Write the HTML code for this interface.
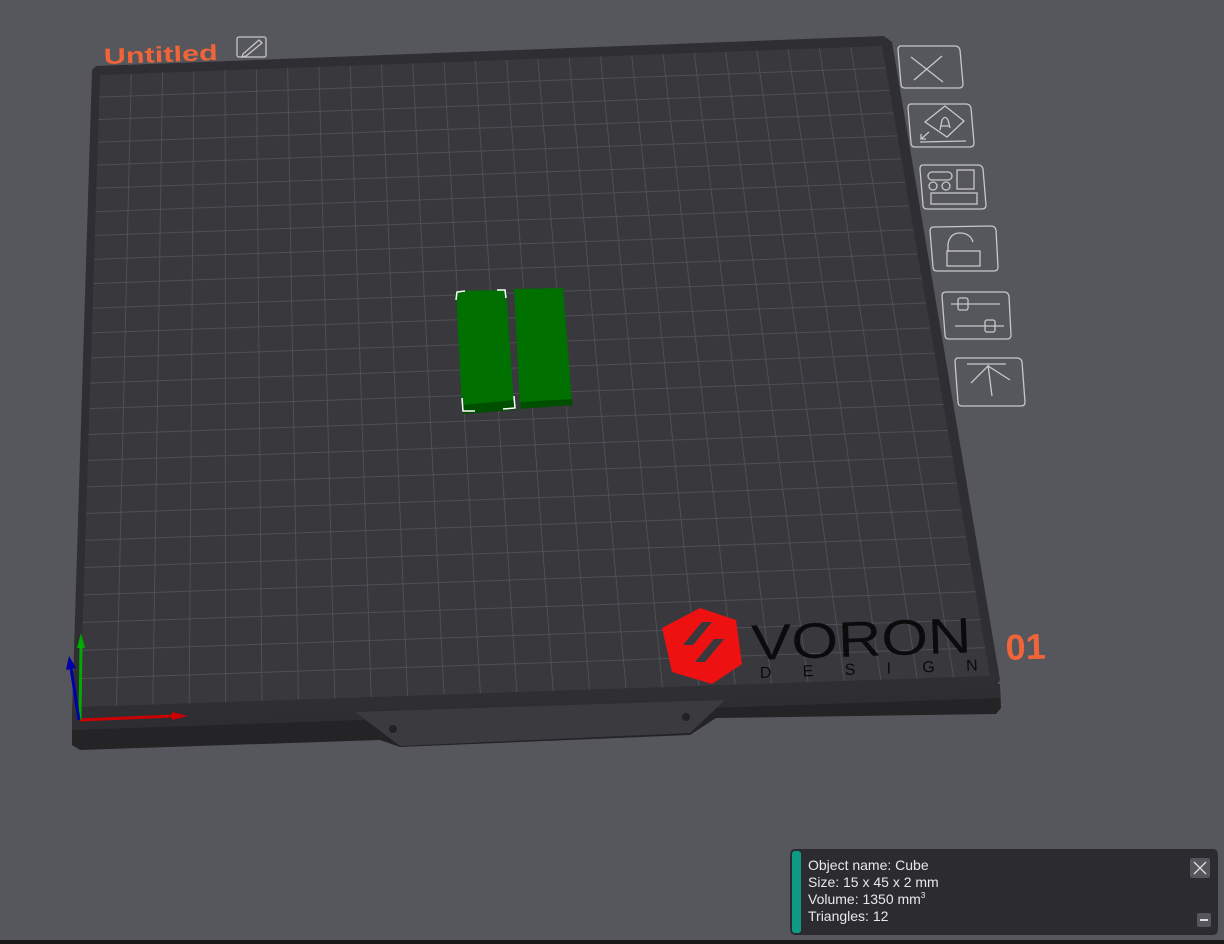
<!DOCTYPE html>
<html><head><meta charset="utf-8"><style>
html,body{margin:0;padding:0;width:1224px;height:944px;overflow:hidden;background:#56575c;font-family:"Liberation Sans",sans-serif}
svg{position:absolute;left:0;top:0}
.panel{position:absolute;left:790px;top:849px;width:428px;height:86px;background:#2c2c30;border-radius:5px;overflow:hidden}
.bar{position:absolute;left:2px;top:2px;width:9px;height:82px;background:#0e9a85;border-radius:3px}
.txt{position:absolute;left:18px;top:8px;color:#e8e8e8;font-size:14px;line-height:17px}
.sup{position:relative;top:-6px;font-size:8px;line-height:0}
.cls{position:absolute;left:400px;top:9px;width:20px;height:20px;background:#55565b;border-radius:2px}
.min{position:absolute;left:407px;top:64px;width:14px;height:14px;background:#55565b;border-radius:2px}
.min:after{content:"";position:absolute;left:3px;top:6px;width:8px;height:2px;background:#ddd}
</style></head><body>
<svg width="1224" height="944" viewBox="0 0 1224 944">
 <polygon points="72,715 1000,684 1001,708 996,714 716,718 690,735 400,747 380,740 80,750 72,745" fill="#242427"/>
 <polygon points="72,715 1000,684 1000,698 72,730" fill="#2e2e32"/>
 <polygon points="355,712 725,700 690,733 400,746" fill="#3a3a3f"/>
 <circle cx="393" cy="729" r="4" fill="#222"/>
 <circle cx="686" cy="717" r="4" fill="#222"/>
 <polygon points="96,66 884,36 892,42 1000,680 995,688 76,720 72,714 92,70" fill="#2f2f33"/>
 <polygon points="100,75 882,46 990,676 80,707" fill="#38383d"/>
 <g id="grid" stroke="#4f5055" stroke-width="1"></g>
 <polygon points="700,608 736,620 742,664 712,684 672,672 662,628" fill="#ee1111"/>
 <polygon points="683,645 702,622 712,622 693,645" fill="#38383d"/>
 <polygon points="695,662 714,639 724,639 705,662" fill="#38383d"/>
 <text x="752" y="660" font-size="50" font-family="Liberation Sans" fill="#0b0b0c" textLength="220" lengthAdjust="spacingAndGlyphs" transform="rotate(-2 752 660)">VORON</text>
 <text x="760" y="678" font-size="16" font-family="Liberation Sans" fill="#0b0b0c" textLength="218" lengthAdjust="spacing" transform="rotate(-2 760 678)">DESIGN</text>
 <text x="1006" y="660" font-size="36" font-weight="bold" font-family="Liberation Sans" fill="#f0643a" transform="rotate(-2 1006 660)">01</text>
 <text x="104" y="64" font-size="22" font-weight="bold" font-family="Liberation Sans" fill="#f0643a" textLength="114" lengthAdjust="spacingAndGlyphs" transform="rotate(-2 104 64)">Untitled</text>
 <g fill="none" stroke="#c8c8c8" stroke-width="1.3">
  <rect x="237" y="37" width="29" height="20" rx="2"/>
  <path d="M243 54 L259 40 L262 43 L246 56 L242 57 Z"/>
 </g>
 <polygon points="456,291 506,290 514,405 462,410" fill="#007000"/>
 <polygon points="462,405 514,400 515,410 463,414" fill="#004f00"/>
 <polygon points="514,289 563,288 572,402 520,406" fill="#007000"/>
 <polygon points="520,402 572,399 573,405 521,409" fill="#004f00"/>
 <path d="M456,300 L457,292 L465,291 M497,290 L505,290 L506,298 M462,398 L463,411 L475,411 M503,409 L515,408 L514,396" fill="none" stroke="#fff" stroke-width="1.5"/>
 <line x1="80" y1="720" x2="175" y2="716" stroke="#c00" stroke-width="3"/>
 <polygon points="172,712 188,716 172,720" fill="#c00"/>
 <line x1="80" y1="720" x2="81" y2="645" stroke="#0a0" stroke-width="3"/>
 <polygon points="77,648 81,633 85,648" fill="#0a0"/>
 <line x1="79" y1="720" x2="71" y2="668" stroke="#00a" stroke-width="3"/>
 <polygon points="66,670 69,656 76,668" fill="#00a"/>
 <g fill="none" stroke="#c8c8c8" stroke-width="1.3">
  <path d="M901,46 L955,46 Q959,46 960,50 L963,84 Q963,88 959,88 L905,88 Q901,88 901,84 L898,50 Q898,46 901,46 Z"/>
  <path d="M911,57 L943,82 M942,56 L914,80"/>
  <path d="M911,104 L966,104 Q970,104 971,108 L974,143 Q974,147 970,147 L915,147 Q911,147 911,143 L908,108 Q908,104 911,104 Z"/>
  <path d="M945,106 L964,121 L947,137 L925,122 Z M940,130 L942,120 Q945,115 948,120 L950,128 M941,126 L949,126 M920,142 L966,141 M929,132 L921,139 M921,134 L921,139 L926,139"/>
  <path d="M923,165 L978,165 Q982,165 983,169 L986,205 Q986,209 982,209 L927,209 Q923,209 923,205 L920,169 Q920,165 923,165 Z"/>
  <rect x="928" y="172" width="24" height="8" rx="4"/><circle cx="933" cy="186" r="4"/><circle cx="946" cy="186" r="4"/>
  <rect x="957" y="170" width="17" height="19"/><rect x="931" y="193" width="46" height="11"/>
  <path d="M934,227 L991,226 Q995,226 996,230 L998,267 Q998,271 994,271 L937,271 Q933,271 933,267 L930,231 Q930,227 934,227 Z"/>
  <path d="M948,252 L948,244 Q950,233 960,233 Q970,233 973,242"/><rect x="947" y="251" width="33" height="15"/>
  <path d="M946,292 L1004,292 Q1008,292 1009,296 L1011,335 Q1011,339 1007,339 L949,339 Q945,339 945,335 L942,296 Q942,292 946,292 Z"/>
  <path d="M951,304 L1000,304 M955,326 L1004,326"/><rect x="958" y="298" width="10" height="12" rx="2"/><rect x="985" y="320" width="10" height="12" rx="2"/>
  <path d="M958,358 L1017,358 Q1021,358 1022,362 L1025,402 Q1025,406 1021,406 L962,406 Q958,406 958,402 L955,362 Q955,358 958,358 Z"/>
  <path d="M967,364 L1006,364 M988,365 L992,396 M971,383 L988,366 L1010,380"/>
 </g>
</svg>
<div class="panel"><div class="bar"></div>
<div class="txt">Object name: Cube<br>Size: 15 x 45 x 2 mm<br>Volume: 1350 mm<span class="sup">3</span><br>Triangles: 12</div>
<div class="cls"><svg width="20" height="20" style="position:static"><path d="M4,4 L16,16 M16,4 L4,16" stroke="#ddd" stroke-width="1.3"/></svg></div>
<div class="min"></div></div>
<div style="position:absolute;left:0;top:940px;width:1224px;height:4px;background:#1a1a1c"></div>
<script>
var g=document.getElementById('grid'),N=25;
var TL=[100,75],TR=[882,46],BR=[990,676],BL=[80,707];
function P(u,v){var tx=TL[0]+(TR[0]-TL[0])*u,ty=TL[1]+(TR[1]-TL[1])*u,bx=BL[0]+(BR[0]-BL[0])*u,by=BL[1]+(BR[1]-BL[1])*u;return [tx+(bx-tx)*v,ty+(by-ty)*v];}
function V(t){return 0.87*t+0.13*t*t;}
var h='';
for(var i=1;i<N;i++){var a=P(i/N,0),b=P(i/N,1);h+='<line x1="'+a[0]+'" y1="'+a[1]+'" x2="'+b[0]+'" y2="'+b[1]+'"/>';
var v=V(i/N),c=P(0,v),d=P(1,v);h+='<line x1="'+c[0]+'" y1="'+c[1]+'" x2="'+d[0]+'" y2="'+d[1]+'"/>';}
g.innerHTML=h;
</script>
</body></html>
